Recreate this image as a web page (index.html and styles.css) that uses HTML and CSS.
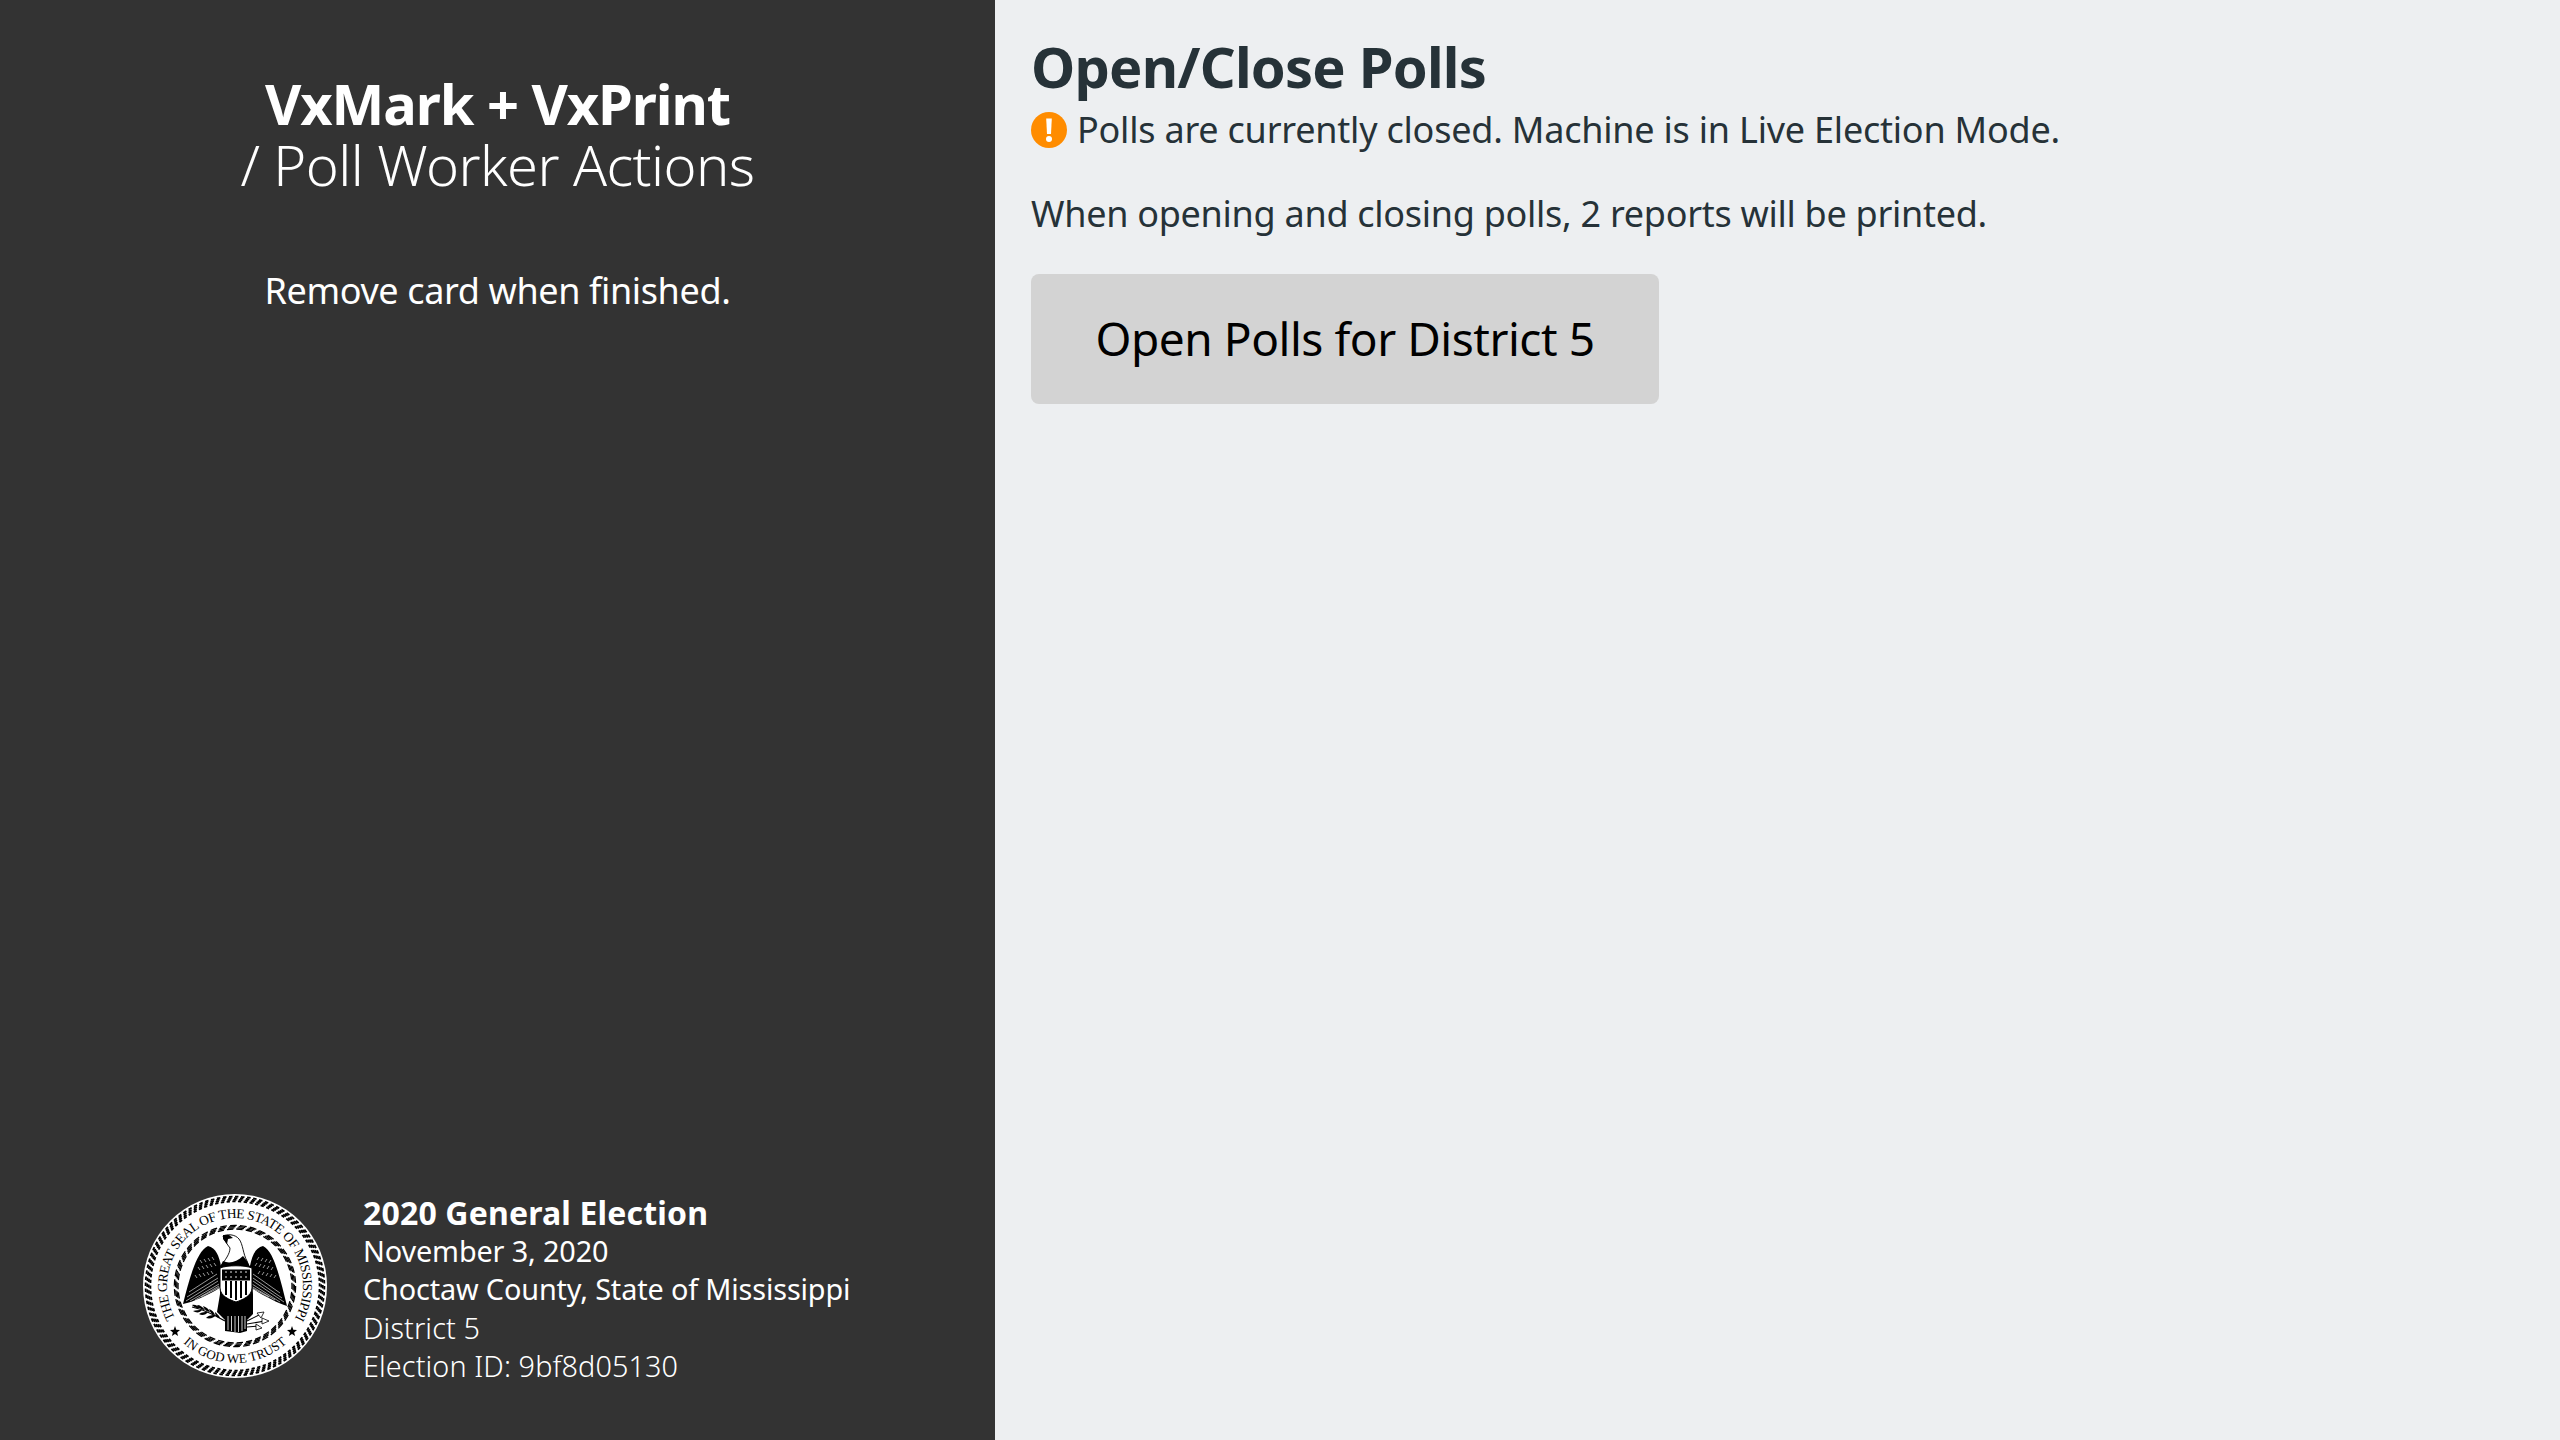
FILE: index.html
```html
<!DOCTYPE html>
<html lang="en">
<head>
<meta charset="utf-8">
<title>Open/Close Polls</title>
<link rel="stylesheet" href="styles.css">
</head>
<body>
<div class="screen">
  <aside class="sidebar">
    <div class="sidebar-top">
      <h1 class="app-title"><span class="app-name">VxMark + VxPrint</span><span class="app-sub">/ Poll Worker Actions</span></h1>
      <p class="remove">Remove card when finished.</p>
    </div>
    <div class="election">
      <svg class="seal" viewBox="0 0 184 184" role="img" aria-label="Seal of the State of Mississippi">
        <defs>
          <path id="arcTop" d="M 92 160 A 68 68 0 1 1 92 24 A 68 68 0 1 1 92 160"/>
          <path id="arcBot" d="M 26 131.7 A 77 77 0 0 0 158 131.7"/>
        </defs>
        <circle cx="92" cy="92" r="92" fill="#fff"/>
        <g fill="none" stroke="#000" stroke-width="1.8" stroke-dasharray=".58 .42">
          <circle cx="92" cy="92" r="89.4" pathLength="92" stroke-dashoffset="0"/>
          <circle cx="92" cy="92" r="87.8" pathLength="92" stroke-dashoffset=".16"/>
          <circle cx="92" cy="92" r="86.2" pathLength="92" stroke-dashoffset=".32"/>
          <circle cx="92" cy="92" r="84.6" pathLength="92" stroke-dashoffset=".48"/>
        </g>
        <g fill="none" stroke="#000" stroke-width="1.3" stroke-dasharray=".68 .32">
          <circle cx="92" cy="92" r="60.6" pathLength="38" stroke-dashoffset="0"/>
          <circle cx="92" cy="92" r="59.4" pathLength="38" stroke-dashoffset=".12"/>
          <circle cx="92" cy="92" r="58.2" pathLength="38" stroke-dashoffset=".24"/>
          <circle cx="92" cy="92" r="57" pathLength="38" stroke-dashoffset=".36"/>
        </g>
        <text class="seal-text"><textPath href="#arcTop" startOffset="50%" text-anchor="middle">THE GREAT SEAL OF THE STATE OF MISSISSIPPI</textPath></text>
        <text class="seal-text seal-bottom"><textPath href="#arcBot" startOffset="50%" text-anchor="middle">IN GOD WE TRUST</textPath></text>
        <path class="seal-star" d="M32 132 L33.3 135.8 L37 136 L34.1 138.4 L35.1 142 L32 140 L28.9 142 L29.9 138.4 L27 136 L30.7 135.8Z"/>
        <path class="seal-star" d="M149 132 L150.3 135.8 L154 136 L151.1 138.4 L152.1 142 L149 140 L145.9 142 L146.9 138.4 L144 136 L147.7 135.8Z"/>
        <!-- wings -->
        <path d="M65 52 C54 57 47 82 40 110 C50 108 66 101 78 93 V72 C76 62 73 54 65 52Z" fill="#000"/>
        <path d="M120 52 C131 57 137 84 144 112 C134 109 119 101 107 93 V72 C109 62 112 54 120 52Z" fill="#000"/>
        <g class="feathers">
          <path d="M46 98 L74 80M44 103 L75 84M43 107 L75 87M47 107 L76 90M52 106 L76 92M58 103 L77 93"/>
          <path d="M137 99 L110 80M139 104 L110 84M141 108 L110 87M137 108 L109 90M132 106 L108 92M126 103 L107 93"/>
          <path d="M55 73 L57 76M59 72 L61 75M63 71 L65 74M67 70 L69 73M71 69 L73 72M57 66 L59 69M61 65 L63 68M65 64 L67 67M69 63 L71 66M52 81 L54 84M56 80 L58 83M60 79 L62 82M64 78 L66 81M68 77 L70 80"/>
          <path d="M130 73 L128 76M126 72 L124 75M122 71 L120 74M118 70 L116 73M114 69 L112 72M128 66 L126 69M124 65 L122 68M120 64 L118 67M116 63 L114 66M133 81 L131 84M129 80 L127 83M125 79 L123 82M121 78 L119 81M117 77 L115 80"/>
        </g>
        <!-- head and neck -->
        <path d="M80 42 C84 40 92 40 96 45 C100 50 100 60 104 67 L106 72 L78 72 C82 66 87 60 87 54 C84 50 81 46 80 42Z" fill="#fff" stroke="#000" stroke-width=".9"/>
        <path d="M80 67 C86 70 94 68 100 62 L104 67 L107 73 L77 73Z" fill="#000"/>
        <path d="M80 41 L80 45 L84 50 L85 45 L90 44 L86 41Z" fill="#000"/>
        <!-- body and tail -->
        <path d="M77 72 L108 72 L110 100 L110 120 L104 126 L104 137 L97 139 L90 138 L82 137 L82 126 L74 118 L77 100Z" fill="#000"/>
        <g class="tail"><path d="M85 122 V136M88.5 122 V137M92 122 V138M95.5 122 V138M99 122 V137M102 122 V135"/></g>
        <!-- shield -->
        <path d="M77 74 C84 71 102 71 109 74 V94 C109 102 99 106 93 108 C87 106 77 102 77 94Z" fill="#fff" stroke="#000" stroke-width="1"/>
        <rect x="79" y="75.5" width="28" height="11" fill="#000"/>
        <g fill="#fff"><circle cx="83" cy="78" r=".8"/><circle cx="88" cy="78" r=".8"/><circle cx="93" cy="78" r=".8"/><circle cx="98" cy="78" r=".8"/><circle cx="103" cy="78" r=".8"/><circle cx="83" cy="83" r=".8"/><circle cx="88" cy="83" r=".8"/><circle cx="93" cy="83" r=".8"/><circle cx="98" cy="83" r=".8"/><circle cx="103" cy="83" r=".8"/></g>
        <path d="M83 87 V101M88 87 V104M93 87 V106M98 87 V104M103 87 V101" stroke="#000" stroke-width="2"/>
        <!-- olive branch -->
        <path d="M49 113 C58 115 68 119 82 127" stroke="#000" stroke-width="1.2" fill="none"/>
        <path d="M49 111 C52 110 55 112 57 114 C54 115 51 113 49 111ZM54 111 C57 111 60 113 62 116 C59 116 56 114 54 111ZM60 112 C63 113 66 115 67 118 C64 118 61 115 60 112ZM50 117 C53 116 56 116 59 116 C57 119 53 119 50 117ZM56 120 C59 118 62 118 65 118 C63 121 59 122 56 120ZM66 115 C69 116 71 118 72 121 C69 121 67 118 66 115ZM63 124 C66 121 69 121 73 121 C71 124 67 125 63 124ZM72 118 C74 120 76 121 77 124 C74 124 72 121 72 118Z" fill="#000"/>
        <!-- arrows -->
        <path d="M104 127 L118 120M104 130 L122 127M104 133 L116 132" stroke="#000" stroke-width="1.1" fill="none"/>
        <path d="M114 119 L121 118 L118 124ZM119 124 L126 127 L119 130ZM113 130 L119 134 L113 136Z" fill="#fff" stroke="#000" stroke-width=".8"/>
      </svg>
      <div class="election-text">
        <div class="e-title">2020 General Election</div>
        <div class="e-line">November 3, 2020</div>
        <div class="e-line e-county">Choctaw County, State of Mississippi</div>
        <div class="e-light">District 5</div>
        <div class="e-light">Election ID: 9bf8d05130</div>
      </div>
    </div>
  </aside>
  <main class="content">
    <h2 class="heading">Open/Close Polls</h2>
    <p class="status">
      <svg class="warn" viewBox="0 0 36 36" aria-hidden="true"><circle cx="18" cy="18" r="18" fill="#ff8c00"/><path d="M15.2 6.5 H20.8 L20 22 H16Z" fill="#fff"/><circle cx="18" cy="27" r="3" fill="#fff"/></svg>
      <span class="status-text">Polls are currently closed. Machine is in Live Election Mode.</span>
    </p>
    <p class="note">When opening and closing polls, 2 reports will be printed.</p>
    <button class="open-btn" type="button">Open Polls for District 5</button>
  </main>
</div>
</body>
</html>
```
FILE: styles.css
```css
* { box-sizing: border-box; }
html, body { margin: 0; height: 100%; }
body { font-family: "Noto Sans", "Open Sans", sans-serif; }
.screen { display: flex; width: 2560px; height: 1440px; overflow: hidden; }
.sidebar {
  width: 995px; flex: none; background: #333; color: #fff;
  display: flex; flex-direction: column; justify-content: space-between;
  padding: 73px 0 0;
}
.sidebar-top { text-align: center; }
.app-title { margin: 0; font-size: 56px; line-height: 61px; font-weight: 700; letter-spacing: -1.05px; }
.app-name, .app-sub { display: block; }
.app-sub { font-weight: 300; letter-spacing: -.55px; }
.remove { margin: 72px 0 0; font-size: 36px; line-height: 48px; letter-spacing: -.38px; }
.election { display: flex; align-items: flex-end; gap: 36px; padding: 0 0 55px 143px; }
.seal { width: 184px; height: 184px; flex: none; margin-bottom: 7px; }
.seal-text { font-family: "Liberation Serif", serif; font-size: 13.5px; letter-spacing: -.5px; fill: #000; }
.seal-bottom { font-size: 13px; letter-spacing: .1px; }
.seal-star { fill: #000; }
.feathers { stroke: #fff; stroke-width: .6; fill: none; }
.tail { stroke: #fff; stroke-width: .8; }
.election-text { font-size: 28.8px; line-height: 38.25px; white-space: nowrap; }
.e-title { font-size: 32px; font-weight: 700; letter-spacing: .16px; }
.e-line { font-weight: 400; letter-spacing: -.13px; }
.e-light { font-weight: 300; letter-spacing: .1px; }
.content { flex: 1; background: #edeff1; color: #263238; padding: 34px 36px 0; }
.heading { margin: 0; font-size: 56px; line-height: 64px; font-weight: 700; letter-spacing: -.8px; }
.status { display: flex; align-items: center; gap: 10px; margin: 0; font-size: 36px; line-height: 48px; padding-top: 8px; letter-spacing: -.22px; }
.warn { width: 36px; height: 36px; flex: none; }
.note { margin: 36px 0 0; font-size: 36px; line-height: 48px; letter-spacing: -.28px; }
.open-btn {
  display: block; margin-top: 36px; width: 628px; height: 130px; padding: 0 0 2px;
  border: 0; border-radius: 8px; background: #d3d3d3; color: #000;
  font-family: inherit; font-size: 46px; letter-spacing: -.46px; white-space: nowrap;
}
```
